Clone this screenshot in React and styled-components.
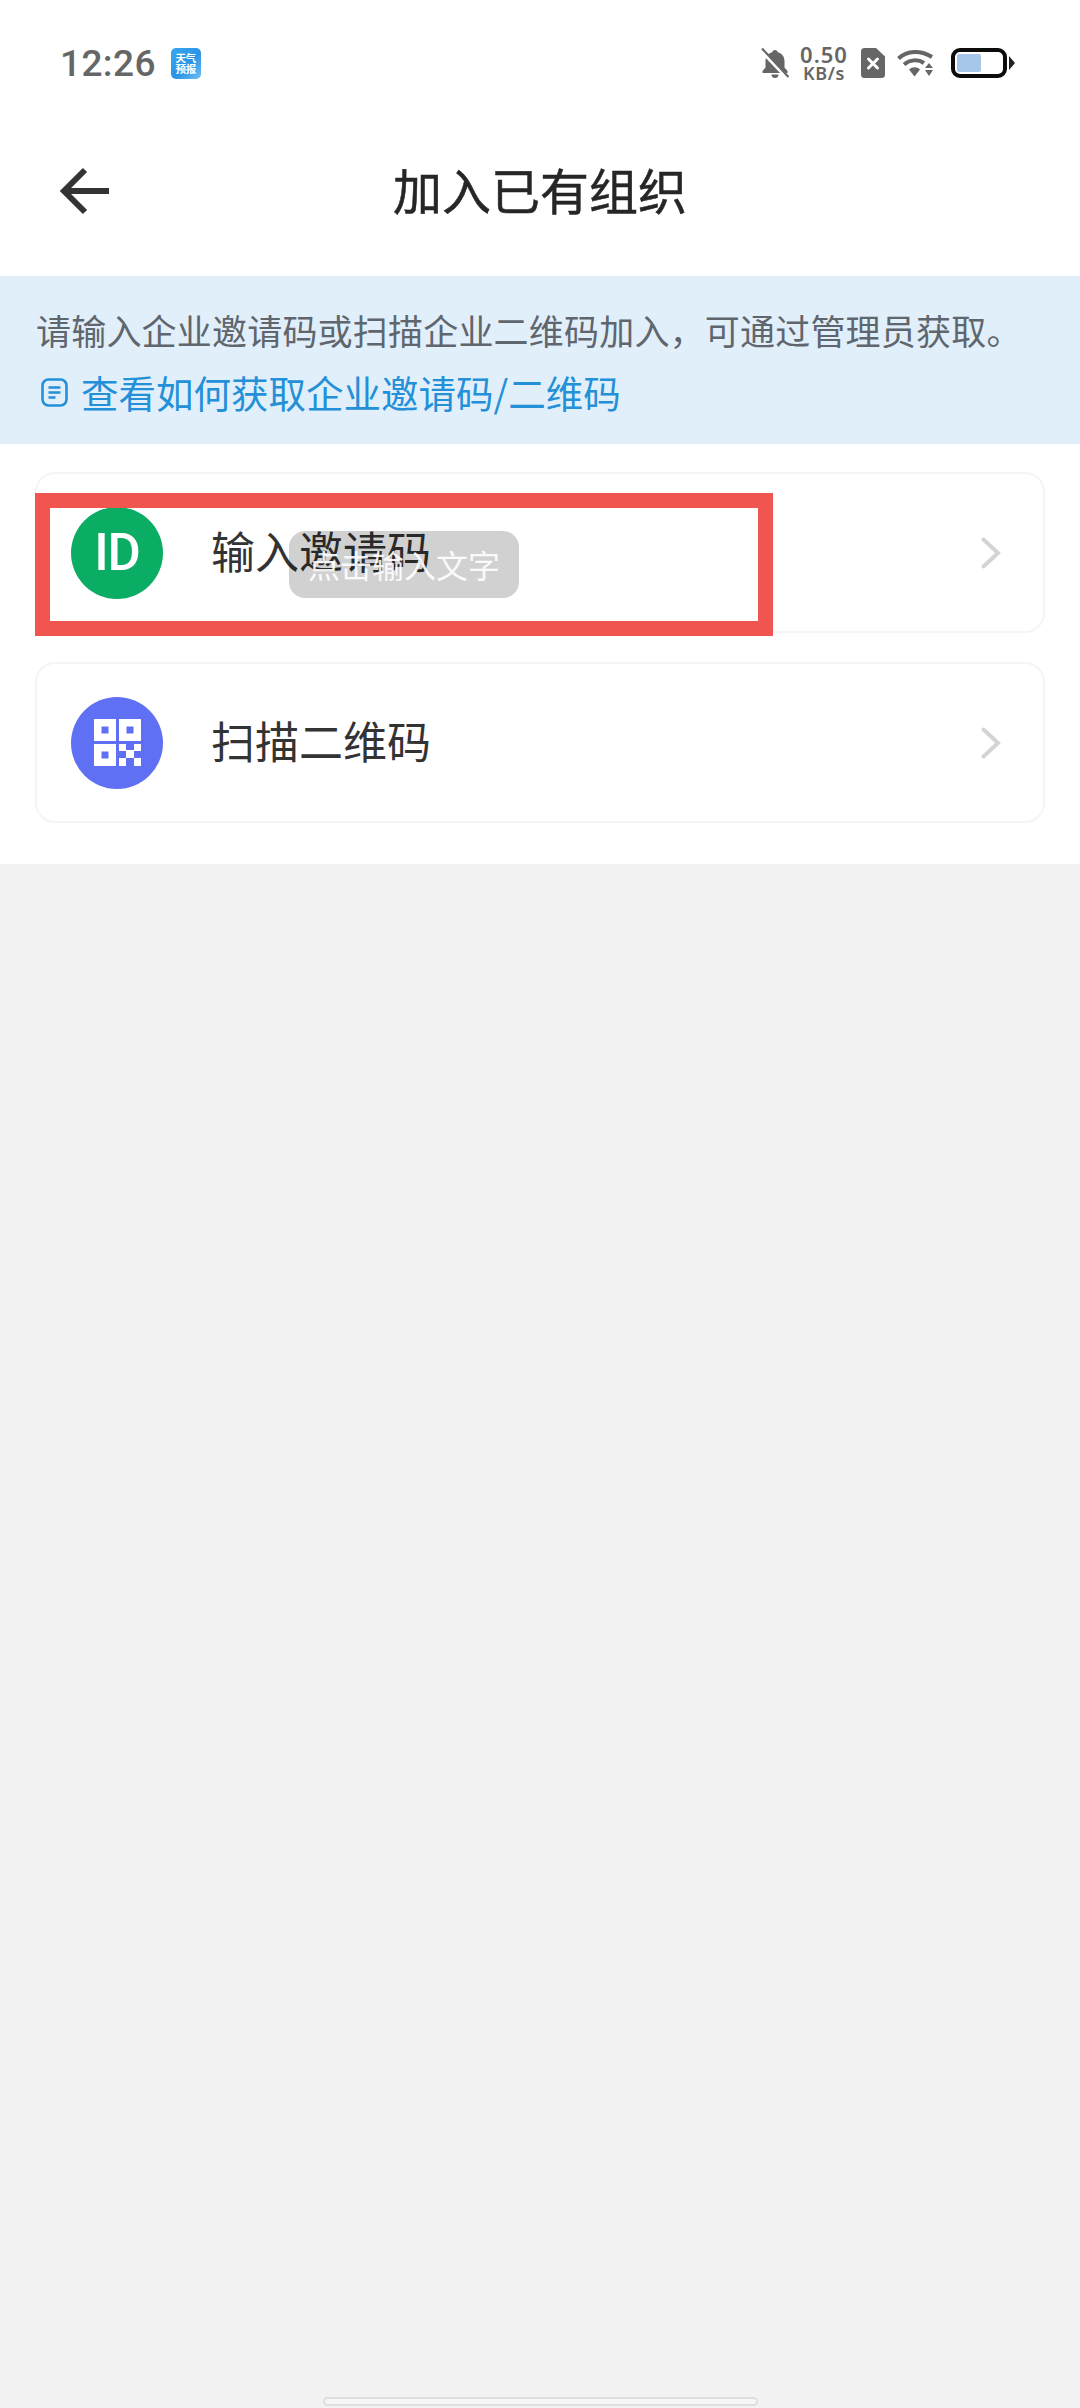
import React from "react";
import styled, { createGlobalStyle } from "styled-components";

const CJK = `"Noto Sans CJK SC", "Noto Sans", sans-serif`;

const Global = createGlobalStyle`
  html, body { margin: 0; padding: 0; background: #f2f2f2; }
  * { box-sizing: border-box; }
`;

const Page = styled.div`
  position: relative;
  width: 1080px;
  height: 2408px;
  overflow: hidden;
  display: flex;
  flex-direction: column;
  background: #f2f2f2;
  font-family: ${CJK};
`;

const Top = styled.div`
  background: #fff;
  padding-bottom: 20px;
`;

const StatusBar = styled.div`
  height: 126px;
  display: flex;
  align-items: center;
  padding: 0 65px 0 60px;
`;

const Time = styled.span`
  font: 500 37px/1 Roboto, sans-serif;
  letter-spacing: 0.4px;
  color: #666;
`;

const WeatherBadge = styled.div`
  width: 30px;
  height: 31px;
  margin-left: 15px;
  border-radius: 5px;
  background: linear-gradient(135deg, #3aa6ee 0%, #2b93e6 55%, #6cc0f2 100%);
  color: #fff;
  font-size: 10.5px;
  line-height: 11px;
  font-weight: 700;
  display: flex;
  flex-direction: column;
  align-items: center;
  justify-content: center;
`;

const StatusRight = styled.div`
  margin-left: auto;
  display: flex;
  align-items: center;
`;

const Speed = styled.div`
  width: 50px;
  margin: 0 12px 0 10px;
  display: flex;
  flex-direction: column;
  align-items: center;
  font-family: "Noto Sans", sans-serif;
  font-weight: 600;
  color: #666;
`;

const SpeedValue = styled.span`
  font-size: 22px;
  line-height: 20px;
  letter-spacing: 1px;
`;

const SpeedUnit = styled.span`
  font-size: 18px;
  line-height: 18px;
  letter-spacing: 0.6px;
`;

const StatusGap = styled.div`
  width: 12px;
`;

const Battery = styled.div`
  position: relative;
  width: 56px;
  height: 30px;
  margin-left: 17px;
  margin-right: 8px;
  border: 4px solid #0c0c0c;
  border-radius: 9px;
  padding: 2px;
  &::after {
    content: "";
    position: absolute;
    right: -12px;
    top: 4px;
    width: 0;
    height: 0;
    border-left: 6px solid #222;
    border-top: 7px solid transparent;
    border-bottom: 7px solid transparent;
  }
`;

const BatteryFill = styled.div`
  height: 100%;
  background: #a6c6ea;
  border-radius: 2px;
`;

const Header = styled.div`
  position: relative;
  height: 130px;
  display: flex;
  align-items: center;
  justify-content: center;
  padding-bottom: 5px;
`;

const BackButton = styled.div`
  position: absolute;
  left: 59px;
  top: 41px;
  width: 50px;
  height: 48px;
  display: flex;
`;

const Title = styled.h1`
  margin: 0;
  font-size: 49px;
  line-height: 60px;
  font-weight: 400;
  -webkit-text-stroke: 0.5px #262626;
  color: #262626;
`;

const Banner = styled.div`
  height: 168px;
  padding: 23px 36px 0;
  background: #e1effb;
`;

const BannerText = styled.div`
  font-size: 35px;
  letter-spacing: 0.2px;
  line-height: 62px;
  color: #5f666d;
  white-space: nowrap;
`;

const BannerLink = styled.div`
  display: flex;
  align-items: center;
  gap: 13px;
  padding-left: 5px;
  font-size: 37.5px;
  line-height: 62px;
  color: #2490d8;
  white-space: nowrap;
`;

const List = styled.div`
  height: 420px;
  padding: 28px 35px 0;
  background: #fff;
  display: flex;
  flex-direction: column;
  gap: 29px;
`;

const Card = styled.div`
  width: 1010px;
  height: 161px;
  border: 2px solid #f5f5f5;
  border-radius: 20px;
  background: #fff;
  display: flex;
  align-items: center;
  padding: 0 42px 0 34px;
`;

const IconCircle = styled.div`
  width: 92px;
  height: 92px;
  border-radius: 50%;
  background: ${(p) => p.$color};
  display: flex;
  align-items: center;
  justify-content: center;
  color: #fff;
  flex: none;
`;

const IdMark = styled.span`
  font: 500 51px/1 Roboto, sans-serif;
  letter-spacing: -1px;
`;

const CardLabel = styled.span`
  margin-left: 48px;
  padding-bottom: 6px;
  font-size: 44px;
  line-height: 60px;
  color: #333;
`;

const Chevron = styled.svg`
  margin-left: auto;
  width: 20px;
  height: 32px;
  flex: none;
`;

const Annotation = styled.div`
  position: absolute;
  left: 35px;
  top: 493px;
  width: 738px;
  height: 143px;
  border: 15px solid #f0554f;
`;

const Toast = styled.div`
  position: absolute;
  left: 289px;
  top: 531px;
  width: 230px;
  height: 67px;
  border-radius: 16px;
  background: rgba(0, 0, 0, 0.18);
  color: rgba(255, 255, 255, 0.92);
  font-size: 32px;
  line-height: 67px;
  text-align: center;
`;

const HomeIndicator = styled.div`
  position: absolute;
  left: 323px;
  bottom: 2px;
  width: 435px;
  height: 9px;
  border: 2px solid #dedede;
  border-radius: 5px;
  background: #f6f6f6;
`;

const BellOff = () => (
  <svg width="28" height="32" viewBox="0 0 28 32">
    <path fill="#666" d="M14 3c-1.600 0-2.600 1-2.800 2.300C7 6.400 4.500 9.700 4.500 14v6.500L1.500 24v2h25v-2L23.500 20.500V14c0-4.300-2.500-7.600-6.700-8.700C16.600 4 15.600 3 14 3zM10.500 27.500a3.500 3.500 0 0 0 7 0z" />
    <path stroke="#fff" strokeWidth="4" d="M0 3 27 31.500" />
    <path stroke="#666" strokeWidth="2.200" d="M1 1.500 27.500 30" />
  </svg>
);

const SimX = () => (
  <svg width="24" height="30" viewBox="0 0 24 30">
    <path fill="#666" d="M3.500 0H15l9 8.500V26.500A3.500 3.500 0 0 1 20.500 30h-17A3.500 3.500 0 0 1 0 26.500v-23A3.500 3.500 0 0 1 3.500 0z" />
    <path stroke="#fff" strokeWidth="3" strokeLinecap="round" d="m7.500 11 9 9m0-9-9 9" />
  </svg>
);

const Wifi = () => (
  <svg width="37" height="28" viewBox="0 0 37 28">
    <g fill="none" stroke="#666" strokeWidth="4">
      <path d="M1.500 9.500C10 1 24 1 35 8" />
      <path d="M7 15.500c6-5 14-5.500 20-1.500" />
    </g>
    <path fill="#666" d="M12 20.500c3.500-3 8-3 11 0l-5.500 7z" />
    <path fill="#666" d="m32 14 4 5h-8zM28 21h8l-4 6z" />
  </svg>
);

const QrIcon = () => (
  <svg width="47" height="47" viewBox="0 0 47 47">
    <path fill="#fff" fillRule="evenodd" d="M0 0h22v22H0zM7.500 7.500v7h7v-7zM25 0h22v22H25zM32.500 7.500v7h7v-7zM0 25h22v22H0zM7.500 32.500v7h7v-7z" />
    <path fill="#fff" d="M25 25h7v7h-7zM40 25h7v7h-7zM32 31h8v8h-8zM25 39h7v8h-7zM40 39h7v8h-7z" />
  </svg>
);

const DocIcon = () => (
  <svg width="27" height="29" viewBox="0 0 27 29">
    <rect x="1.500" y="1.500" width="24" height="26" rx="6" fill="none" stroke="#2490d8" strokeWidth="2.600" />
    <path stroke="#2490d8" strokeWidth="2.400" d="M7.500 9.500h12M7.500 14.500h12M7.500 19.500h7" />
  </svg>
);

const ChevronIcon = () => (
  <Chevron viewBox="0 0 20 32">
    <path fill="none" stroke="#d4d4d4" strokeWidth="4" strokeLinecap="round" d="M2.500 2.500 17 16 2.500 29.500" />
  </Chevron>
);

export default function App() {
  return (
    <Page>
      <Global />
      <Top>
        <StatusBar>
          <Time>12:26</Time>
          <WeatherBadge>
            <span>天气</span>
            <span>预报</span>
          </WeatherBadge>
          <StatusRight>
            <BellOff />
            <Speed>
              <SpeedValue>0.50</SpeedValue>
              <SpeedUnit>KB/s</SpeedUnit>
            </Speed>
            <SimX />
            <StatusGap />
            <Wifi />
            <Battery>
              <BatteryFill style={{ width: "55%" }} />
            </Battery>
          </StatusRight>
        </StatusBar>
        <Header>
          <BackButton>
            <svg width="50" height="48" viewBox="0 0 50 48">
              <path fill="none" stroke="#333" strokeWidth="6" d="M26 3 5 24l21 21M5 24h45" />
            </svg>
          </BackButton>
          <Title>加入已有组织</Title>
        </Header>
      </Top>
      <Banner>
        <BannerText>请输入企业邀请码或扫描企业二维码加入，可通过管理员获取。</BannerText>
        <BannerLink>
          <DocIcon />
          <span>查看如何获取企业邀请码/二维码</span>
        </BannerLink>
      </Banner>
      <List>
        <Card>
          <IconCircle $color="#0aad63">
            <IdMark>ID</IdMark>
          </IconCircle>
          <CardLabel>输入邀请码</CardLabel>
          <ChevronIcon />
        </Card>
        <Card>
          <IconCircle $color="#5f70f5">
            <QrIcon />
          </IconCircle>
          <CardLabel>扫描二维码</CardLabel>
          <ChevronIcon />
        </Card>
      </List>
      <Annotation />
      <Toast>点击输入文字</Toast>
      <HomeIndicator />
    </Page>
  );
}
